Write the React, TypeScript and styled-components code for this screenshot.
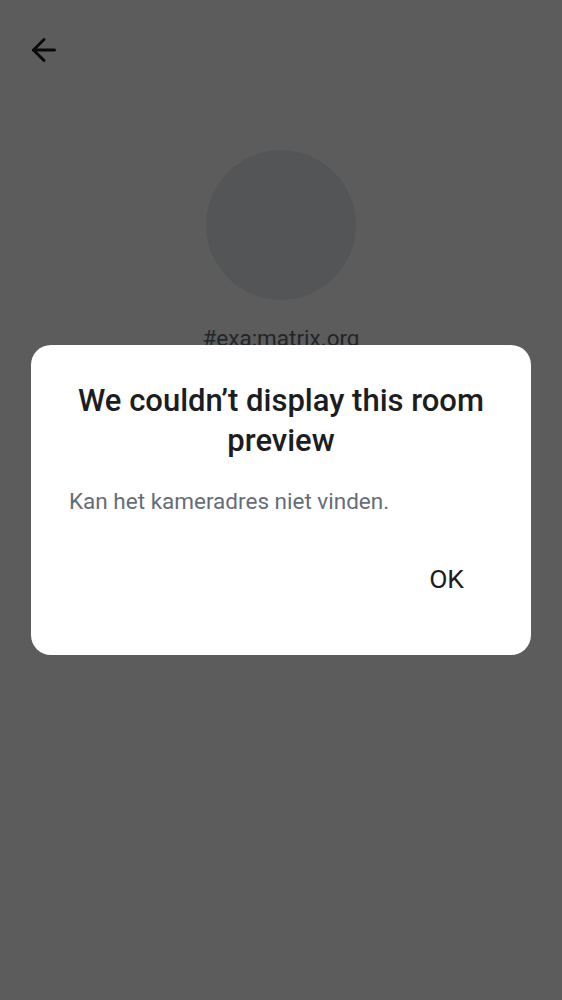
import React from "react";
import styled, { createGlobalStyle } from "styled-components";

const Global = createGlobalStyle`
  html, body { margin: 0; padding: 0; }
  body { font-family: Roboto, "Noto Sans", sans-serif; background: #ffffff; }
`;

const Screen = styled.div`
  position: relative;
  width: 562px;
  height: 1000px;
  overflow: hidden;
  background: #ffffff;
  display: flex;
  flex-direction: column;
  align-items: center;
`;

const TopBar = styled.div`
  align-self: stretch;
  height: 100px;
  display: flex;
  align-items: center;
  padding-left: 26px;
  box-sizing: border-box;
`;

const BackButton = styled.button`
  border: 0;
  background: none;
  padding: 0;
  width: 36px;
  height: 36px;
  display: flex;
  color: #1b1d22;
`;

const Avatar = styled.div`
  width: 150px;
  height: 150px;
  border-radius: 50%;
  background: #e8ecf2;
  margin-top: 50px;
`;

const Alias = styled.div`
  margin-top: 24px;
  font-size: 22.5px;
  line-height: 28px;
  color: #62666d;
`;

const Scrim = styled.div`
  position: absolute;
  inset: 0;
  background: rgba(0, 0, 0, 0.64);
  display: flex;
  align-items: flex-start;
  justify-content: center;
`;

const Dialog = styled.div`
  margin-top: 345px;
  width: 500px;
  height: 310px;
  box-sizing: border-box;
  background: #ffffff;
  border-radius: 20px;
  padding: 36px 38px 0 38px;
  display: flex;
  flex-direction: column;
`;

const Title = styled.h2`
  margin: 0;
  text-align: center;
  font-size: 31px;
  line-height: 40px;
  font-weight: 500;
  color: #1b1d22;
`;

const Body = styled.p`
  margin: 26px 0 0 0;
  font-size: 22.5px;
  line-height: 28px;
  color: #656d77;
`;

const Actions = styled.div`
  display: flex;
  justify-content: flex-end;
  margin-top: 44px;
  margin-right: 17px;
`;

const TextButton = styled.button`
  border: 0;
  background: none;
  font-family: inherit;
  font-size: 26.5px;
  line-height: 40px;
  height: 40px;
  padding: 0 12px;
  color: #1b1d22;
  font-weight: 400;
`;

export default function App() {
  return (
    <>
      <Global />
      <Screen>
        <TopBar>
          <BackButton aria-label="Back">
            <svg
              width="36"
              height="36"
              viewBox="0 0 24 24"
              fill="none"
              stroke="currentColor"
              strokeWidth="2"
              strokeLinecap="round"
              strokeLinejoin="round"
            >
              <path d="M19 12H5" />
              <path d="M12 19l-7-7 7-7" />
            </svg>
          </BackButton>
        </TopBar>
        <Avatar />
        <Alias>#exa:matrix.org</Alias>
        <Scrim>
          <Dialog role="dialog">
            <Title>We couldn’t display this room preview</Title>
            <Body>Kan het kameradres niet vinden.</Body>
            <Actions>
              <TextButton>OK</TextButton>
            </Actions>
          </Dialog>
        </Scrim>
      </Screen>
    </>
  );
}
